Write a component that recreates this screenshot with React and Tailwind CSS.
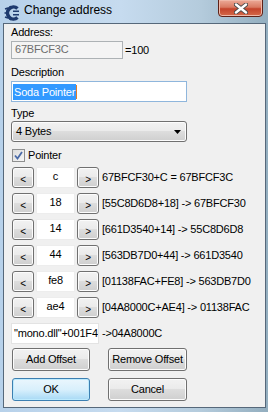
import React from "react";

// Win7 style push button
function Btn({ children, className = "", focused = false }) {
  return (
    <div
      className={
        "flex items-center justify-center rounded-[3px] border " +
        (focused
          ? "border-[#3c7fb1] bg-gradient-to-b from-[#eaf6fd] via-[#d9f0fc] to-[#a7d9f5] shadow-[inset_0_0_0_1px_#bdeafd] "
          : "border-[#707070] bg-[linear-gradient(#f2f2f2,#ebebeb_45%,#dddddd_50%,#cfcfcf)] shadow-[inset_0_0_0_1px_#fcfcfc] ") +
        className
      }
    >
      {children}
    </div>
  );
}

function OffsetRow({ value, text }) {
  return (
    <div className="flex items-center h-[21px]">
      <Btn className="ml-[1px] w-[22px] h-[21px] pt-[3px] text-[10px]">&lt;</Btn>
      <div className="ml-[2px] w-[39px] h-[21px] bg-white border border-[#ededed] flex items-center justify-center pb-[2px]">
        {value}
      </div>
      <Btn className="ml-[2px] w-[22px] h-[21px] pt-[3px] text-[10px]">&gt;</Btn>
      <span className="ml-[3px] whitespace-nowrap">{text}</span>
    </div>
  );
}

function TitleBar() {
  return (
    <div className="relative h-[23px] flex items-start">
      <svg className="ml-[4px] mt-[5px]" width="17" height="16" viewBox="0 0 17 16">
        <path
          d="M13.5 3.5 A6 6 0 1 0 13.5 12.5"
          fill="none"
          stroke="#1e3a6e"
          strokeWidth="3.6"
        />
        <path d="M1 4 L4 3 M0.5 8 H3.5 M1 12 L4 13 M6 1 L6.5 3.5 M6 15 L6.5 12.5" stroke="#1e3a6e" strokeWidth="1.6" />
        <path d="M9 6.2 H15 M9 9.8 H15" stroke="#1e3a6e" strokeWidth="1.4" />
      </svg>
      <span className="ml-[3px] mt-[4px] text-[12px] tracking-normal text-black">Change address</span>
      <div className="ml-auto mr-[5px] mt-[-1px] w-[45px] h-[18px] rounded-b-[4px] border border-[#5e2218] bg-[linear-gradient(#ecaa98,#d97a62_45%,#c4432b_55%,#d46a4a)] shadow-[inset_0_0_0_1px_#f0b8a8] flex items-center justify-center">
        <svg width="14" height="11" viewBox="0 0 14 11">
          <path d="M2 1.5 L12 9.5 M12 1.5 L2 9.5" stroke="#4a4a4a" strokeWidth="4.2" strokeLinecap="round" />
          <path d="M2 1.5 L12 9.5 M12 1.5 L2 9.5" stroke="#ffffff" strokeWidth="2.4" strokeLinecap="round" />
        </svg>
      </div>
    </div>
  );
}

export default function App() {
  const rows = [
    ["c", "67BFCF30+C = 67BFCF3C"],
    ["18", "[55C8D6D8+18] -> 67BFCF30"],
    ["14", "[661D3540+14] -> 55C8D6D8"],
    ["44", "[563DB7D0+44] -> 661D3540"],
    ["fe8", "[01138FAC+FE8] -> 563DB7D0"],
    ["ae4", "[04A8000C+AE4] -> 01138FAC"],
  ];

  return (
    <div className="w-[268px] h-[412px] overflow-hidden flex flex-col bg-[linear-gradient(90deg,#b7d1ea,#c6dbef_45%,#b4cbdc_75%,#93aebf)] font-['Liberation_Sans',Arial,sans-serif] text-[11px] leading-[13px] tracking-[-0.2px] text-black">
      <TitleBar />

      <div className="ml-[3px] w-[263px] h-[385px] border border-[#56687a] bg-[#f0f0f0] pl-[7px] pt-[2px] flex flex-col">
        <span>Address:</span>
        <div className="mt-[2px] flex items-center h-[18px]">
          <div className="w-[112px] h-[18px] border border-[#adb2b5] bg-[#f4f4f4] text-[#6d6d6d] pl-[3px] pt-[1px]">
            67BFCF3C
          </div>
          <span className="ml-[2px]">=100</span>
        </div>

        <span className="mt-[7px]">Description</span>
        <div className="mt-[2px] w-[176px] h-[21px] border border-[#8fb6dc] bg-white pl-[1px] flex items-center">
          <span className="bg-[#3399ff] text-white px-[1px] h-[16px] leading-[16px]">Soda Pointer</span>
          <span className="w-[1px] h-[14px] bg-[#e07a2a]" />
        </div>

        <span className="mt-[5px]">Type</span>
        <div className="mt-[1px] w-[176px] h-[21px] rounded-[3px] border border-[#707070] bg-[linear-gradient(#f2f2f2,#ebebeb_45%,#dddddd_50%,#cfcfcf)] shadow-[inset_0_0_0_1px_#fcfcfc] flex items-center pl-[4px] pr-[5px]">
          <span>4 Bytes</span>
          <svg className="ml-auto" width="7" height="4" viewBox="0 0 7 4">
            <path d="M0 0 H7 L3.5 4 Z" fill="#000" />
          </svg>
        </div>

        <div className="mt-[7px] ml-[1px] flex items-center h-[13px]">
          <div className="w-[13px] h-[13px] border border-[#8e8f8f] bg-[linear-gradient(135deg,#dcdcdc,#f6f6f6)] flex items-center justify-center">
            <svg width="9" height="9" viewBox="0 0 9 9">
              <path d="M1 4.5 L3.5 7.5 L8 1" fill="none" stroke="#4a6aa8" strokeWidth="1.8" />
            </svg>
          </div>
          <span className="ml-[3px]">Pointer</span>
        </div>

        <div className="mt-[5px] flex flex-col gap-[5px]">
          {rows.map(([v, t]) => (
            <OffsetRow key={t} value={v} text={t} />
          ))}
          <div className="flex items-center h-[21px]">
            <div className="w-[88px] h-[21px] overflow-hidden whitespace-nowrap bg-white border border-[#e3e3e3] pl-[2px] flex items-center">
              "mono.dll"+001F4C
            </div>
            <span className="ml-[3px]">-&gt;04A8000C</span>
          </div>
        </div>

        <div className="mt-[4px] ml-[1px] flex gap-[18px]">
          <Btn className="w-[78px] h-[23px]">Add Offset</Btn>
          <Btn className="w-[79px] h-[23px]">Remove Offset</Btn>
        </div>
        <div className="mt-[7px] ml-[1px] flex gap-[18px]">
          <Btn focused className="w-[78px] h-[23px]">OK</Btn>
          <Btn className="w-[79px] h-[23px]">Cancel</Btn>
        </div>
      </div>
    </div>
  );
}
